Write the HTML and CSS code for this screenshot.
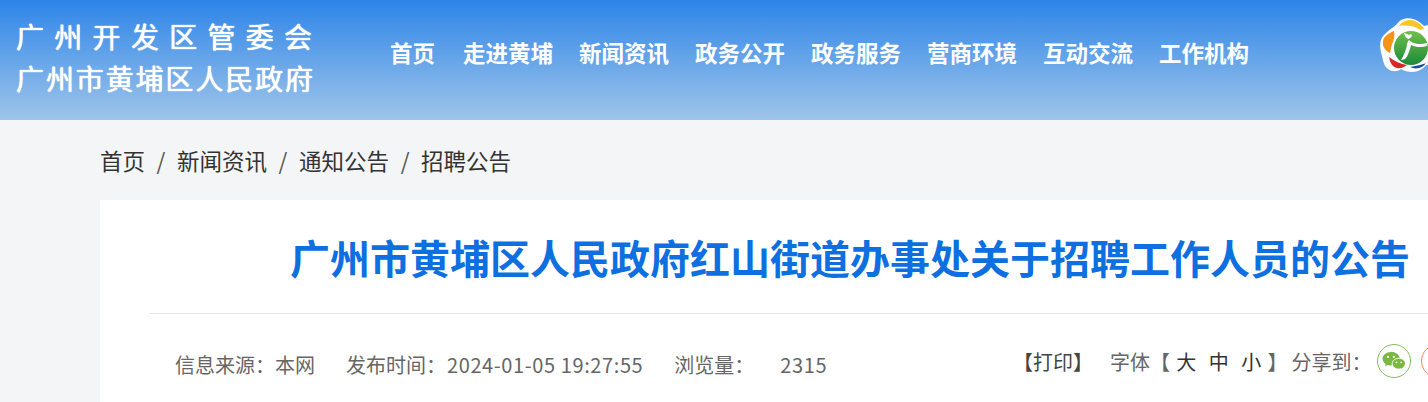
FILE: index.html
```html
<!DOCTYPE html>
<html lang="zh-CN">
<head>
  <meta charset="UTF-8">
  <title>广州市黄埔区人民政府红山街道办事处关于招聘工作人员的公告</title>
  <link rel="stylesheet" href="styles.css">
</head>
<body>
  <div class="page">
    <header class="top">
      <div class="brand">
        <div class="brand-line spaced">广州开发区管委会</div>
        <div class="brand-line">广州市黄埔区人民政府</div>
      </div>
      <nav class="nav">
        <a>首页</a>
        <a>走进黄埔</a>
        <a>新闻资讯</a>
        <a>政务公开</a>
        <a>政务服务</a>
        <a>营商环境</a>
        <a>互动交流</a>
        <a>工作机构</a>
      </nav>
      <svg class="logo" width="64" height="55" viewBox="0 0 64 55">
        <defs>
          <linearGradient id="leaf" x1="0" y1="0" x2="0" y2="1">
            <stop offset="0" stop-color="#6fc04a"/>
            <stop offset="1" stop-color="#1c8a3a"/>
          </linearGradient>
        </defs>
        <path d="M17 6C20 1 27-1 33 1c4 1 8 4 11 7 6-2 14-2 18 3v30c-4 5-10 6-16 6-3 4-8 7-14 7-4 0-8-1-11-3-4 3-9 3-13 0-4-3-5-8-6-13C1 34-1 28 1 22c2-6 9-10 16-16z" fill="#fff"/>
        <path d="M3 23c1-5 6-8 11-10 1 5 0 9-2 13l-2 9C6 33 2 29 3 23z" fill="#f39317"/>
        <path d="M19 8c4-6 11-7 16-5 4 2 7 4 9 8-3 1-5 1-7-1-4-2-11-3-18-2z" fill="#f7c62a"/>
        <path d="M9 39c1 5 3 10 8 11 4 1 7-1 10-3-6-1-13-4-18-8z" fill="#d9262c"/>
        <path d="M30 49c6 3 13 1 16-4 4 0 9-1 13-3l1-5c-5 5-14 10-30 12z" fill="#17479e"/>
        <path d="M47 12c5-2 10-1 13 2v9c-2-5-7-9-13-11z" fill="#19a0d8"/>
        <circle cx="31" cy="30" r="17" fill="url(#leaf)"/>
        <path d="M24 15c2 0 3 1 5 2 1-1 3-1 3 1l-3 3c-2 0-4-2-5-6z" fill="#fff"/>
        <path d="M29 22c4 4 10 5 18 3v3c-6 2-12 1-16-1-1 5-3 10-5 13-1 1-3 2-5 2 3-5 5-10 6-15 0-2 1-4 2-5z" fill="#fff"/>
      </svg>
    </header>

    <main class="main">
      <div class="crumbs">
        <a>首页</a><span class="sep">/</span><a>新闻资讯</a><span class="sep">/</span><a>通知公告</a><span class="sep">/</span><a>招聘公告</a>
      </div>
      <article class="card">
        <h1 class="title">广州市黄埔区人民政府红山街道办事处关于招聘工作人员的公告</h1>
        <div class="meta">
          <div class="meta-left">
            <span>信息来源&#xFF1A;本网</span>
            <span>发布时间&#xFF1A;<span class="num">2024-01-05 19:27:55</span></span>
            <span class="views">浏览量&#xFF1A;<span class="num">2315</span></span>
          </div>
          <div class="meta-right">
            <span class="print">【打印】</span>
            <span class="font-size">字体【<i>大</i><i>中</i><i>小</i>】</span>
            <span>分享到&#xFF1A;</span>
            <span class="share wechat">
              <svg width="24" height="20" viewBox="0 0 24 20">
                <path d="M9 1C4.300 1 .6 4 .6 7.800c0 2.200 1.200 4 3.100 5.300L3 15.400l2.700-1.400c1 .3 2 .4 3.100.4 3.500 0 9-3 9-7 0-3.500-4.500-6.700-8.800-6.700z" fill="#7ab840"/>
                <path d="M23.400 12.700c0-3-2.900-5.400-6.600-5.400s-6.600 2.400-6.600 5.400 2.900 5.400 6.600 5.400c.8 0 1.500-.1 2.200-.3l2.200 1.200-.6-1.900c1.700-1 2.800-2.600 2.800-4.400z" fill="#7ab840" stroke="#fff" stroke-width="1"/>
                <circle cx="6" cy="5.900" r="1.100" fill="#fff"/>
                <circle cx="11.800" cy="5.900" r="1.100" fill="#fff"/>
                <circle cx="14.500" cy="11.300" r=".9" fill="#fff"/>
                <circle cx="19.200" cy="11.300" r=".9" fill="#fff"/>
              </svg>
            </span>
            <span class="share weibo"></span>
          </div>
        </div>
      </article>
    </main>
  </div>
</body>
</html>
```

FILE: styles.css
```css
* {
  margin: 0;
  padding: 0;
  box-sizing: border-box;
}
html, body {
  height: 100%;
  overflow: hidden;
}
body {
  font-family: "Noto Sans CJK SC", "Noto Sans", sans-serif;
  background-color: #f4f5f7;
}
.page {
  width: 1700px;
}
.top {
  height: 120px;
  display: flex;
  align-items: flex-start;
  padding-left: 16px;
  background: linear-gradient(180deg, #2e85e8 0%, #9fc5ea 100%);
}
.brand {
  width: 300px;
  margin-top: 15px;
  color: #fff;
  font-size: 28px;
  line-height: 42px;
  letter-spacing: 1.9px;
  white-space: nowrap;
  text-shadow: 0 0 1px #fff, 0 0 1px #fff;
}
.brand-line.spaced {
  letter-spacing: 10.3px;
}
.nav {
  display: flex;
  gap: 26px;
  margin: 36px 0 0 74px;
  color: #fff;
  font-size: 22.5px;
  line-height: 32px;
  font-weight: 700;
}
.nav a:first-child {
  margin-right: 2px;
}
.logo {
  margin: 18px 0 0 131px;
}
.main {
  padding: 0 100px;
}
.crumbs {
  height: 80px;
  display: flex;
  align-items: center;
  font-size: 22.5px;
  color: #333;
}
.sep {
  width: 32px;
  text-align: center;
  color: #555;
}
.card {
  background-color: #fff;
  padding: 0 50px;
  height: 400px;
}
.title {
  height: 114px;
  border-bottom: 1px solid #e5e5e5;
  display: flex;
  align-items: center;
  justify-content: center;
  color: #0d6fe0;
  font-size: 40px;
  font-weight: 700;
}
.meta {
  display: flex;
  justify-content: space-between;
  padding: 36px 25px 0;
  font-size: 20px;
  color: #666;
}
.meta-left {
  display: flex;
  gap: 31px;
}
.num {
  letter-spacing: .6px;
  margin-left: 1px;
}
.views .num {
  margin-left: 26px;
}
.meta-right {
  display: flex;
  align-items: center;
  width: 500px;
  margin-top: -7px;
}
.print {
  color: #444;
  margin-left: -12px;
}
.font-size {
  margin: 0 4px 0 17px;
}
.font-size i {
  font-style: normal;
  color: #333;
  margin: 0 6.25px;
}
.share {
  width: 34px;
  height: 34px;
  border-radius: 50%;
  border: 1px solid #7fc35a;
  display: flex;
  align-items: center;
  justify-content: center;
  margin-left: 5px;
  flex-shrink: 0;
}
.share.weibo {
  border-color: #f08a5d;
  margin-left: 10px;
}
```
